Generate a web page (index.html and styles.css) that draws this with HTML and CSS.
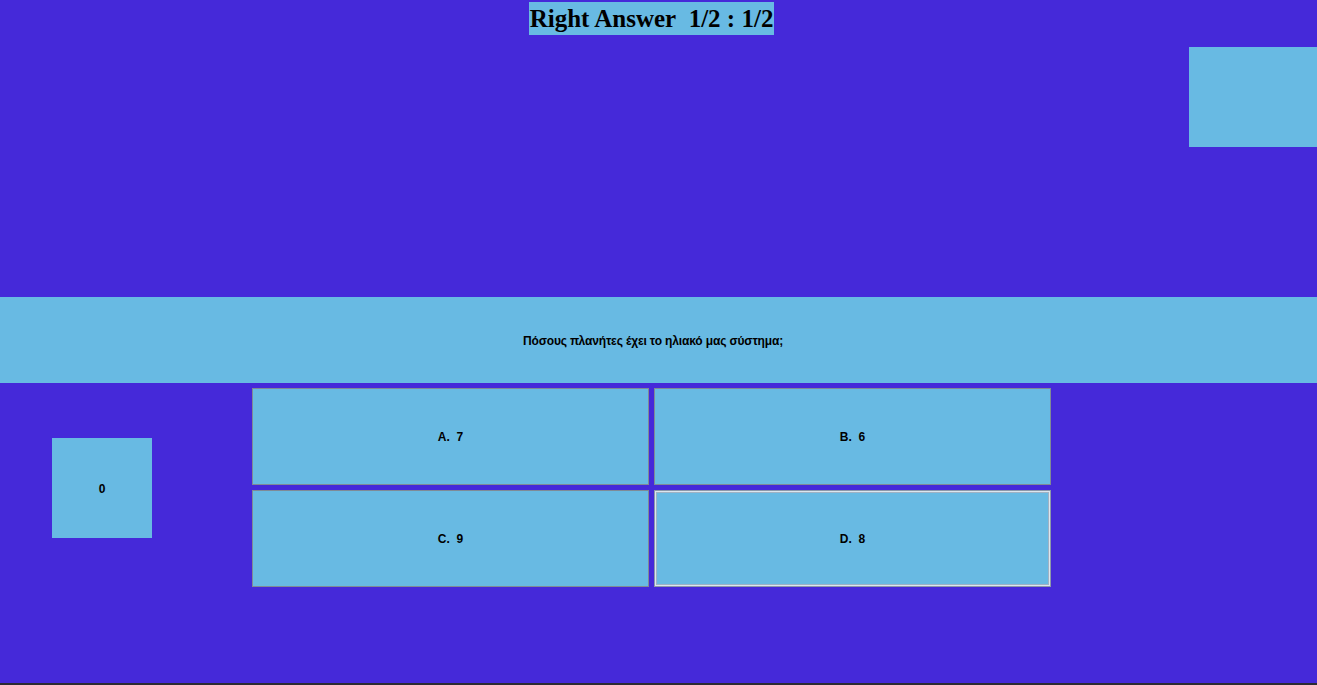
FILE: index.html
```html
<!DOCTYPE html>
<html lang="el">
<head>
<meta charset="utf-8">
<title>Quiz</title>
<link rel="stylesheet" href="styles.css">
</head>
<body>
<div class="page">
  <header class="header">
    <h1 class="score">Right Answer&nbsp; 1/2 : 1/2</h1>
  </header>
  <section class="top">
    <div class="side-box"></div>
  </section>
  <section class="question">
    <p class="question-text">Πόσους πλανήτες έχει το ηλιακό μας σύστημα;</p>
  </section>
  <section class="play">
    <div class="timer">0</div>
    <div class="answers">
      <button class="answer">A.&nbsp; 7</button>
      <button class="answer">B.&nbsp; 6</button>
      <button class="answer">C.&nbsp; 9</button>
      <button class="answer answer-focus">D.&nbsp; 8</button>
    </div>
  </section>
  <footer class="footer"></footer>
</div>
</body>
</html>
```
FILE: styles.css
```css
* { box-sizing: border-box; }
html, body { margin: 0; padding: 0; }
body {
  background: #4529d9;
  font-family: "Liberation Sans", Arial, sans-serif;
  overflow: hidden;
}
.page {
  width: 1317px;
  height: 685px;
  display: flex;
  flex-direction: column;
}
.header {
  display: flex;
  justify-content: center;
  padding-top: 2px;
  padding-right: 14px;
  height: 35px;
}
.score {
  margin: 0;
  background: #68bae3;
  color: #000;
  font-family: "Liberation Serif", "Times New Roman", serif;
  font-weight: bold;
  font-size: 25px;
  line-height: 33px;
  height: 33px;
  padding: 0 1px;
  white-space: pre;
}
.top {
  height: 262px;
  display: flex;
  justify-content: flex-end;
  padding-top: 12px;
}
.side-box {
  width: 128px;
  height: 100px;
  background: #68bae3;
}
.question {
  height: 86px;
  background: #68bae3;
  display: flex;
  align-items: center;
  justify-content: center;
  padding-right: 11px;
}
.question-text {
  margin: 0;
  font-size: 12px;
  font-weight: bold;
  letter-spacing: -0.15px;
  color: #000;
  padding-top: 1px;
}
.play {
  display: flex;
  align-items: center;
  margin-top: 5px;
  padding-left: 52px;
  gap: 100px;
}
.timer {
  width: 100px;
  height: 100px;
  background: #68bae3;
  display: flex;
  align-items: center;
  justify-content: center;
  font-size: 12px;
  font-weight: bold;
  color: #000;
  margin-top: 1px;
  padding-top: 2px;
}
.answers {
  display: grid;
  grid-template-columns: 397px 397px;
  grid-template-rows: 97px 97px;
  gap: 5px;
}
.answer {
  background: #68bae3;
  border: 1px solid #7f8a96;
  font-family: "Liberation Sans", Arial, sans-serif;
  font-size: 12px;
  font-weight: bold;
  color: #000;
  padding: 0;
  margin: 0;
}
.answer-focus {
  border: 1px solid #8c98aa;
  box-shadow: inset 0 0 0 1px #dbe6ef, inset 0 0 0 2px #9fb2c4;
}
.footer {
  margin-top: auto;
  height: 2px;
  background: #2b2b33;
}
```
